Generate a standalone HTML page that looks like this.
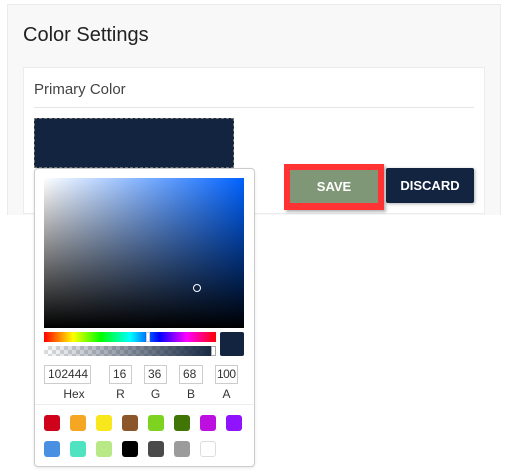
<!DOCTYPE html><html><head><style>
*{box-sizing:border-box;margin:0;padding:0}
body{width:507px;height:473px;background:#fff;font-family:"Liberation Sans",sans-serif;position:relative;overflow:hidden}
.a{position:absolute}
.sw{position:absolute;width:16px;height:16px;border-radius:3px}
.in{position:absolute;top:365px;height:19px;border:1px solid #ccc;font-size:12px;color:#333;padding-left:3px;line-height:17px;background:#fff;overflow:hidden;white-space:nowrap}
.lb{position:absolute;top:387px;font-size:12px;color:#333;text-align:center}
</style></head><body>
<div class="a" style="left:7px;top:4px;width:494px;height:211px;background:#f8f8f8;border:1px solid #ebebeb;border-bottom:none"></div>
<div class="a" style="left:23px;top:24px;font-size:20px;color:#222">Color Settings</div>
<div class="a" style="left:23px;top:67px;width:462px;height:147px;background:#fff;border:1px solid #ececec"></div>
<div class="a" style="left:34px;top:81px;font-size:15px;color:#444">Primary Color</div>
<div class="a" style="left:34px;top:107px;width:440px;height:1px;background:#e6e6e6"></div>
<div class="a" style="left:34px;top:118px;width:200px;height:50px;background:#12243f;border:1px dashed #777"></div>
<div class="a" style="left:284px;top:164px;width:100px;height:46px;background:#f33;box-shadow:2px 2px 3px rgba(0,0,0,.3)"></div>
<div class="a" style="left:290px;top:170px;width:88px;height:33px;background:#7f9677;color:#fff;font-weight:bold;font-size:13px;text-align:center;line-height:33px">SAVE</div>
<div class="a" style="left:386px;top:168px;width:88px;height:35px;background:#12243f;color:#fff;font-weight:bold;font-size:13px;text-align:center;line-height:35px;border-radius:2px;box-shadow:1px 1px 3px rgba(0,0,0,.3)">DISCARD</div>
<div class="a" style="left:34px;top:168px;width:221px;height:299px;background:#fff;border:1px solid #ccc;border-radius:4px;box-shadow:0 1px 3px rgba(0,0,0,.1)"></div>
<div class="a" style="left:44px;top:178px;width:200px;height:150px;background:linear-gradient(to top,#000,rgba(0,0,0,0)),linear-gradient(to right,#fff,#0062ff)"></div>
<div class="a" style="left:193px;top:284px;width:8px;height:8px;border:1.5px solid #fff;border-radius:50%"></div>
<div class="a" style="left:44px;top:332px;width:172px;height:10px;background:linear-gradient(to right,#f00,#ff0 17%,#0f0 33%,#0ff 50%,#00f 67%,#f0f 83%,#f00)"></div>
<div class="a" style="left:146px;top:332px;width:4px;height:10px;background:#fff;border:1px solid #ccc"></div>
<div class="a" style="left:44px;top:346px;width:172px;height:10px;background:linear-gradient(to right,rgba(18,36,63,0),#12243f),repeating-conic-gradient(#ddd 0 25%,#fff 0 50%) 0 0/8px 8px"></div>
<div class="a" style="left:211px;top:346px;width:5px;height:10px;background:#fff;border:1px solid #aaa"></div>
<div class="a" style="left:220px;top:332px;width:24px;height:24px;background:#12243f;border-radius:2px"></div>
<div class="in" style="left:44px;width:47px">102444</div>
<div class="in" style="left:109px;width:23px">16</div>
<div class="in" style="left:144px;width:23px">36</div>
<div class="in" style="left:179px;width:24px">68</div>
<div class="in" style="left:215px;width:23px;padding-left:1px;letter-spacing:-0.5px">100</div>
<div class="lb" style="left:44px;width:60px">Hex</div>
<div class="lb" style="left:109px;width:23px">R</div>
<div class="lb" style="left:144px;width:23px">G</div>
<div class="lb" style="left:179px;width:24px">B</div>
<div class="lb" style="left:215px;width:23px">A</div>
<div class="a" style="left:35px;top:404px;width:219px;height:1px;background:#eee"></div>
<div class="sw" style="left:44px;top:415px;background:#d0021b"></div>
<div class="sw" style="left:70px;top:415px;background:#f5a623"></div>
<div class="sw" style="left:96px;top:415px;background:#f8e71c"></div>
<div class="sw" style="left:122px;top:415px;background:#8b572a"></div>
<div class="sw" style="left:148px;top:415px;background:#7ed321"></div>
<div class="sw" style="left:174px;top:415px;background:#417505"></div>
<div class="sw" style="left:200px;top:415px;background:#bd10e0"></div>
<div class="sw" style="left:226px;top:415px;background:#9013fe"></div>
<div class="sw" style="left:44px;top:441px;background:#4a90e2"></div>
<div class="sw" style="left:70px;top:441px;background:#50e3c2"></div>
<div class="sw" style="left:96px;top:441px;background:#b8e986"></div>
<div class="sw" style="left:122px;top:441px;background:#000"></div>
<div class="sw" style="left:148px;top:441px;background:#4a4a4a"></div>
<div class="sw" style="left:174px;top:441px;background:#9b9b9b"></div>
<div class="sw" style="left:200px;top:441px;background:#fff;border:1px solid #ddd"></div>
</body></html>
